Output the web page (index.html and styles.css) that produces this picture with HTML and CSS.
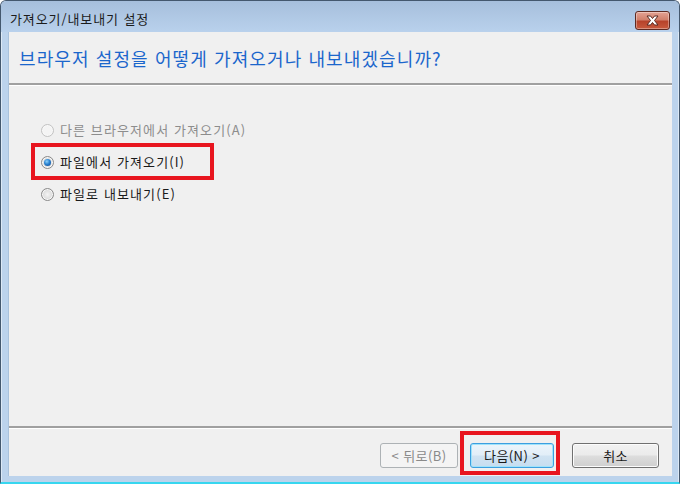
FILE: index.html
```html
<!DOCTYPE html>
<html lang="ko">
<head>
<meta charset="utf-8">
<link rel="stylesheet" href="styles.css">
</head>
<body>
<div class="window">
  <div class="titlebar">
    <span class="title">가져오기/내보내기 설정</span>
    <div class="close">
      <svg width="17" height="11" viewBox="0 0 17 11">
        <path d="M3 1 L6.5 1 L8.5 3.5 L10.5 1 L14 1 L10.5 5.5 L14 10 L10.5 10 L8.5 7.5 L6.5 10 L3 10 L6.5 5.5 Z" fill="#fff" stroke="#5a2a22" stroke-width="1" stroke-linejoin="round"/>
      </svg>
    </div>
  </div>
  <div class="client">
    <div class="header">
      <h1 class="heading">브라우저 설정을 어떻게 가져오거나 내보내겠습니까?</h1>
    </div>
    <div class="sep"></div>
    <div class="content">
      <label class="option disabled"><span class="radio"></span><span>다른 브라우저에서 가져오기(A)</span></label>
      <label class="option highlighted"><span class="radio checked"></span><span>파일에서 가져오기(I)</span><span class="mark mark-option"></span></label>
      <label class="option"><span class="radio"></span><span>파일로 내보내기(E)</span></label>
    </div>
    <div class="sep"></div>
    <div class="footer">
      <button class="btn btn-back" disabled>&lt; 뒤로(B)</button>
      <button class="btn btn-next">다음(N) &gt;<span class="mark mark-btn"></span></button>
      <button class="btn btn-cancel">취소</button>
    </div>
  </div>
</div>
</body>
</html>
```

FILE: styles.css
```css
* { box-sizing: border-box; }
html, body { margin: 0; padding: 0; }
body {
  width: 680px;
  height: 484px;
  overflow: hidden;
  font-family: "Noto Sans CJK KR", "Noto Sans", sans-serif;
  background: #fff;
}
.window {
  width: 680px;
  height: 484px;
  display: flex;
  flex-direction: column;
  border: 1px solid #44586e;
  border-bottom: 2px solid #37d6ef;
  border-radius: 6px 6px 0 0;
  background: #bcd3ec;
  box-shadow: inset 1px 1px 0 #dce9f6, inset -1px 0 0 #dce9f6;
}
.titlebar {
  height: 31px;
  flex: none;
  display: flex;
  align-items: center;
  justify-content: space-between;
  padding: 0 9px 0 9px;
  background: linear-gradient(#a6bfdc, #b9d1ec);
  border-radius: 5px 5px 0 0;
}
.title {
  font-size: 13px;
  letter-spacing: 0.9px;
  color: #1b1b1b;
  line-height: 1;
  margin-top: 4px;
}
.close {
  width: 35px;
  height: 19px;
  margin-top: 7px;
  border: 1px solid #5e2a22;
  border-radius: 3px;
  background: linear-gradient(#e4a394 0%, #d1806c 45%, #b7432b 55%, #c85a3d 100%);
  box-shadow: inset 0 0 0 1px rgba(255,255,255,0.35);
  display: flex;
  align-items: center;
  justify-content: center;
}
.client {
  flex: 1;
  margin: 0 7px 6px 7px;
  background: #f0f0f0;
  display: flex;
  flex-direction: column;
  border-left: 1px solid #a9c2dc;
}
.header {
  height: 51px;
  flex: none;
  display: flex;
  align-items: center;
  padding-left: 10px;
}
.heading {
  margin: 0;
  font-weight: normal;
  font-size: 18px;
  color: #1b66cc;
  letter-spacing: 1.1px;
}
.sep {
  height: 3px;
  flex: none;
  border-top: 2px solid #a0a0a0;
  border-bottom: 1px solid #ffffff;
}
.content {
  flex: 1;
  display: flex;
  flex-direction: column;
  padding: 35px 0 0 32px;
  gap: 14px;
}
.option {
  position: relative;
  display: flex;
  align-items: center;
  gap: 6px;
  font-size: 13px;
  letter-spacing: 1.1px;
  line-height: 18px;
  color: #1a1a1a;
  height: 18px;
}
.option.disabled { color: #8d8d8d; }
.radio {
  width: 13px;
  height: 13px;
  border-radius: 50%;
  border: 1px solid #8a8a8a;
  background: radial-gradient(circle at 50% 50%, #f4f4f4 0, #dcdcdc 60%, #cfcfcf 100%);
  box-shadow: inset 0 0 0 1px #f8f8f8;
  position: relative;
  flex: none;
}
.disabled .radio {
  border-color: #c2c2c2;
  background: #f4f4f4;
}
.radio.checked::after {
  content: "";
  position: absolute;
  left: 2px;
  top: 2px;
  width: 7px;
  height: 7px;
  border-radius: 50%;
  background: radial-gradient(circle at 40% 35%, #8fd2fa 0, #2b84d2 45%, #0a3f8a 100%);
}
.mark {
  position: absolute;
  border: 4px solid #e8151f;
  pointer-events: none;
}
.mark-option {
  left: -10px;
  top: -10px;
  width: 183px;
  height: 37px;
}
.footer {
  height: 47px;
  flex: none;
  display: flex;
  align-items: flex-start;
  justify-content: flex-end;
  padding: 14px 13px 0 0;
}
.btn {
  position: relative;
  height: 25px;
  font-family: "Noto Sans CJK KR", "Noto Sans", sans-serif;
  font-size: 13px;
  letter-spacing: 0.4px;
  color: #1a1a1a;
  border: 1px solid #707070;
  border-radius: 3px;
  background: linear-gradient(#f2f2f2 0%, #ebebeb 48%, #dddddd 52%, #cfcfcf 100%);
  box-shadow: inset 0 0 0 1px #fcfcfc;
  padding: 0;
  line-height: 1;
}
.btn-back {
  width: 78px;
  color: #8a8a8a;
  border-color: #adb2b5;
  background: #f4f4f4;
  box-shadow: none;
}
.btn-next {
  width: 84px;
  margin-left: 12px;
  border-color: #3c9fe0;
  box-shadow: inset 0 0 0 1px #9fe3fb;
  background: linear-gradient(#ecf5fb 0%, #e2eef8 48%, #d0e3f2 52%, #c6ddf0 100%);
}
.btn-cancel {
  width: 87px;
  margin-left: 18px;
}
.mark-btn {
  left: -11px;
  top: -13px;
  width: 100px;
  height: 44px;
}
```
